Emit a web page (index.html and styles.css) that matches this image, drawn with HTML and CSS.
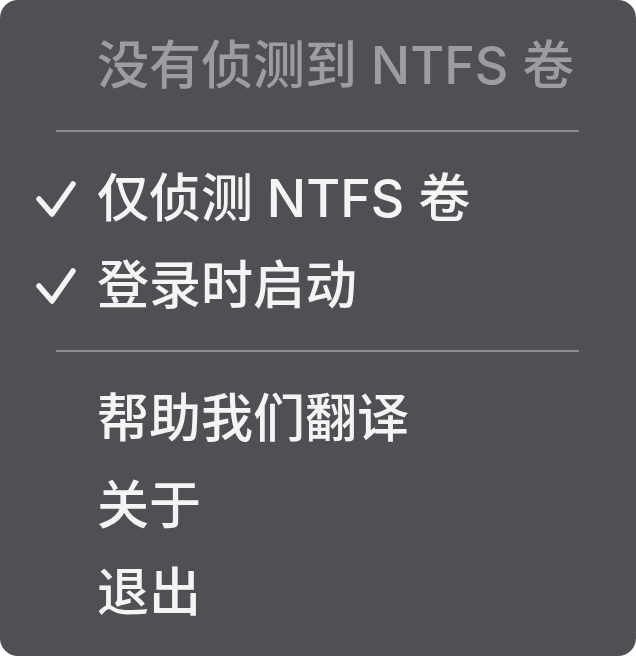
FILE: index.html
```html
<!DOCTYPE html>
<html lang="zh-CN">

<head>
    <meta charset="UTF-8">
    <meta name="viewport" content="width=device-width, initial-scale=1.0">
    <title>NTFS 菜单</title>
    <link rel="stylesheet" href="styles.css">
</head>

<body>
    <div class="menu">
        <div class="item disabled">
            <span class="mark"></span>
            <span class="label">没有侦测到 NTFS 卷</span>
        </div>

        <div class="sep"></div>

        <div class="item">
            <span class="mark">
                <svg class="check" viewBox="0 0 40 36" width="40" height="36">
                    <path d="M3 18 L16 33 L37 3" />
                </svg>
            </span>
            <span class="label">仅侦测 NTFS 卷</span>
        </div>
        <div class="item">
            <span class="mark">
                <svg class="check" viewBox="0 0 40 36" width="40" height="36">
                    <path d="M3 18 L16 33 L37 3" />
                </svg>
            </span>
            <span class="label">登录时启动</span>
        </div>

        <div class="sep"></div>

        <div class="item">
            <span class="mark"></span>
            <span class="label">帮助我们翻译</span>
        </div>
        <div class="item">
            <span class="mark"></span>
            <span class="label">关于</span>
        </div>
        <div class="item">
            <span class="mark"></span>
            <span class="label">退出</span>
        </div>
    </div>
</body>

</html>
```

FILE: styles.css
```css
body {
    margin: 0;
    background-color: #ffffff;
    font-family: "Inter", "Noto Sans CJK SC", sans-serif;
}

.menu {
    width: 636px;
    height: 656px;
    box-sizing: border-box;
    padding-top: 22px;
    background-color: #4f5054;
    border-radius: 18px;
    overflow: hidden;
}

.item {
    display: grid;
    grid-template-columns: 97px auto;
    align-items: center;
    height: 87px;
    font-size: 52px;
    font-weight: 500;
    line-height: 87px;
    color: #f4f4f5;
}

.item.disabled {
    color: #9c9da1;
}

.mark {
    display: flex;
    align-items: center;
    height: 87px;
    padding-left: 36px;
}

.check path {
    fill: none;
    stroke: #f4f4f5;
    stroke-width: 5.5;
    stroke-linecap: round;
    stroke-linejoin: round;
}

.label {
    white-space: nowrap;
}

.sep {
    height: 2px;
    margin: 21px 57px 23px 56px;
    background-color: #8d8e92;
}
```
